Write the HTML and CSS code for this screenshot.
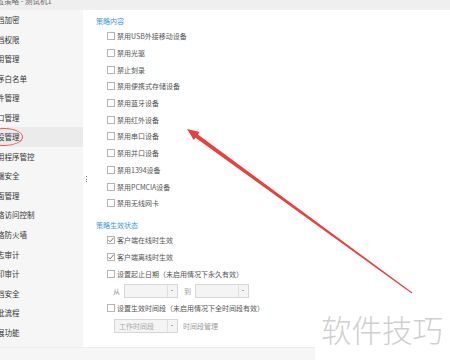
FILE: index.html
```html
<!DOCTYPE html>
<html lang="zh-CN">
  <head>
    <meta charset="UTF-8" />
    <meta name="viewport" content="width=device-width, initial-scale=1.0" />
    <title>设置策略 - 测试机1</title>
    <link rel="stylesheet" href="styles.css">
  </head>
  <body>
    <div class="app">
      <div class="topbar"><span class="title">设置策略 - 测试机1</span></div>

      <div class="layout">
        <ul class="sidebar">
          <li>档加密</li>
          <li>档权限</li>
          <li>用管理</li>
          <li>序白名单</li>
          <li>件管理</li>
          <li>口管理</li>
          <li class="active">设管理<span class="circle"></span></li>
          <li>用程序管控</li>
          <li>端安全</li>
          <li>面管理</li>
          <li>络访问控制</li>
          <li>络防火墙</li>
          <li>志审计</li>
          <li>印审计</li>
          <li>档安全</li>
          <li>批流程</li>
          <li>展功能</li>
        </ul>

        <div class="splitter"><i></i><i></i><i></i></div>

        <div class="main">
          <div class="section-title">策略内容</div>
          <ul class="options">
            <li><span class="box"></span>禁用USB外接移动设备</li>
            <li><span class="box"></span>禁用光驱</li>
            <li><span class="box"></span>禁止刻录</li>
            <li><span class="box"></span>禁用便携式存储设备</li>
            <li><span class="box"></span>禁用蓝牙设备</li>
            <li><span class="box"></span>禁用红外设备</li>
            <li><span class="box"></span>禁用串口设备</li>
            <li><span class="box"></span>禁用并口设备</li>
            <li><span class="box"></span>禁用1394设备</li>
            <li><span class="box"></span>禁用PCMCIA设备</li>
            <li><span class="box"></span>禁用无线网卡</li>
          </ul>

          <div class="section-title second">策略生效状态</div>
          <ul class="options">
            <li>
              <span class="box checked">
                <svg viewBox="0 0 8 8"><path d="M1.5 4.2 L3.2 5.9 L6.6 1.8" /></svg>
              </span>客户端在线时生效
            </li>
            <li>
              <span class="box checked">
                <svg viewBox="0 0 8 8"><path d="M1.5 4.2 L3.2 5.9 L6.6 1.8" /></svg>
              </span>客户端离线时生效
            </li>
            <li><span class="box"></span>设置起止日期（未启用情况下永久有效）</li>
          </ul>

          <div class="date-row">
            <span class="label">从</span>
            <span class="select small"><span class="value"></span><span class="arrow"></span></span>
            <span class="label to">到</span>
            <span class="select small"><span class="value"></span><span class="arrow"></span></span>
          </div>

          <ul class="options">
            <li><span class="box"></span>设置生效时间段（未启用情况下全时间段有效）</li>
          </ul>

          <div class="time-row">
            <span class="select wide"><span class="value">工作时间段</span><span class="arrow"></span></span>
            <span class="link">时间段管理</span>
          </div>
        </div>
      </div>

      <div class="footer"></div>
    </div>

    <div class="watermark">软件技巧</div>

    <svg class="arrow-mark" viewBox="0 0 450 360" width="450" height="360">
      <polygon points="187,129 199.6,132.1 197.9,134.5 412.3,292.6 411.7,293.4 195.5,137.7 193.8,140.1" />
    </svg>
  </body>
</html>
```

FILE: styles.css
```css
/* Global styles */
* {
  margin: 0;
  padding: 0;
  box-sizing: border-box;
}

body {
  width: 450px;
  height: 360px;
  overflow: hidden;
  background: #ffffff;
  font-family: "Noto Sans CJK SC", "Noto Sans", sans-serif;
  color: #555;
  position: relative;
}

ul {
  list-style: none;
}

.app {
  display: flex;
  flex-direction: column;
  height: 360px;
}

.topbar {
  height: 10px;
  background: #efefef;
  overflow: hidden;
}

.topbar .title {
  display: block;
  margin: -5px 0 0 -11px;
  font-size: 7.5px;
  line-height: 12px;
  color: #666;
  white-space: nowrap;
}

.layout {
  display: flex;
  height: 337px;
}

/* Left navigation */
.sidebar {
  width: 83px;
  flex-shrink: 0;
  background: #f6f6f6;
  overflow: hidden;
}

.sidebar li {
  position: relative;
  height: 19.56px;
  line-height: 19.56px;
  font-size: 7.5px;
  color: #333;
  text-indent: -3px;
  white-space: nowrap;
}

.sidebar li.active {
  background: #ebebeb;
}

.sidebar .circle {
  position: absolute;
  left: -14px;
  top: 1px;
  width: 37px;
  height: 18px;
  border: 1px solid #e0605a;
  border-radius: 50%;
}

.splitter {
  width: 0;
  position: relative;
}

.splitter i {
  position: absolute;
  left: 3px;
  width: 1px;
  height: 1px;
  background: #777;
}

.splitter i:nth-child(1) { top: 166px; }
.splitter i:nth-child(2) { top: 168.5px; }
.splitter i:nth-child(3) { top: 171px; }

/* Main panel */
.main {
  flex: 1;
  background: #ffffff;
  padding: 4px 0 0 13px;
  font-size: 7px;
}

.section-title {
  height: 14px;
  line-height: 14px;
  color: #3a96dc;
}

.section-title.second {
  margin-top: 6.3px;
}

.options li {
  display: flex;
  align-items: center;
  height: 16.7px;
  padding-left: 11px;
  white-space: nowrap;
}

.box {
  display: inline-flex;
  align-items: center;
  justify-content: center;
  width: 8px;
  height: 8px;
  margin-right: 2px;
  border: 1px solid #b5b5b5;
  background: #fff;
  flex-shrink: 0;
}

.box svg {
  width: 8px;
  height: 8px;
  flex-shrink: 0;
}

.box svg path {
  fill: none;
  stroke: #666;
  stroke-width: 0.9;
}

.date-row {
  display: flex;
  align-items: center;
  height: 18px;
  padding-left: 17px;
}

.label {
  color: #999;
  margin-right: 4px;
}

.label.to {
  margin-left: 6px;
}

.select {
  display: flex;
  height: 14px;
  border: 1px solid #d6d6d6;
  background: #f4f4f4;
}

.select.small {
  width: 54px;
}

.select.wide {
  width: 64px;
}

.select .value {
  flex: 1;
  padding-left: 4px;
  line-height: 12px;
  color: #aaa;
  white-space: nowrap;
}

.select .arrow {
  position: relative;
  width: 10px;
  border-left: 1px solid #e0e0e0;
}

.select .arrow::after {
  content: "";
  position: absolute;
  left: 3px;
  top: 5px;
  width: 2px;
  height: 1px;
  background: #aaa;
}

.time-row {
  display: flex;
  align-items: center;
  height: 16px;
  margin-top: 1px;
  padding-left: 18px;
}

.link {
  margin-left: 5px;
  color: #999;
}

.footer {
  height: 13px;
  background: #f6f6f6;
  border-top: 1px solid #ececec;
}

/* Overlays */
.watermark {
  position: absolute;
  right: 0;
  bottom: 0;
  width: 135px;
  height: 58px;
  background: #ffffff;
  padding-left: 6px;
  font-size: 30.5px;
  font-weight: 300;
  line-height: 54px;
  color: #cfcfcf;
  letter-spacing: 0;
  white-space: nowrap;
}

.arrow-mark {
  position: absolute;
  left: 0;
  top: 0;
}

.arrow-mark polygon {
  fill: #e8403b;
}
```
